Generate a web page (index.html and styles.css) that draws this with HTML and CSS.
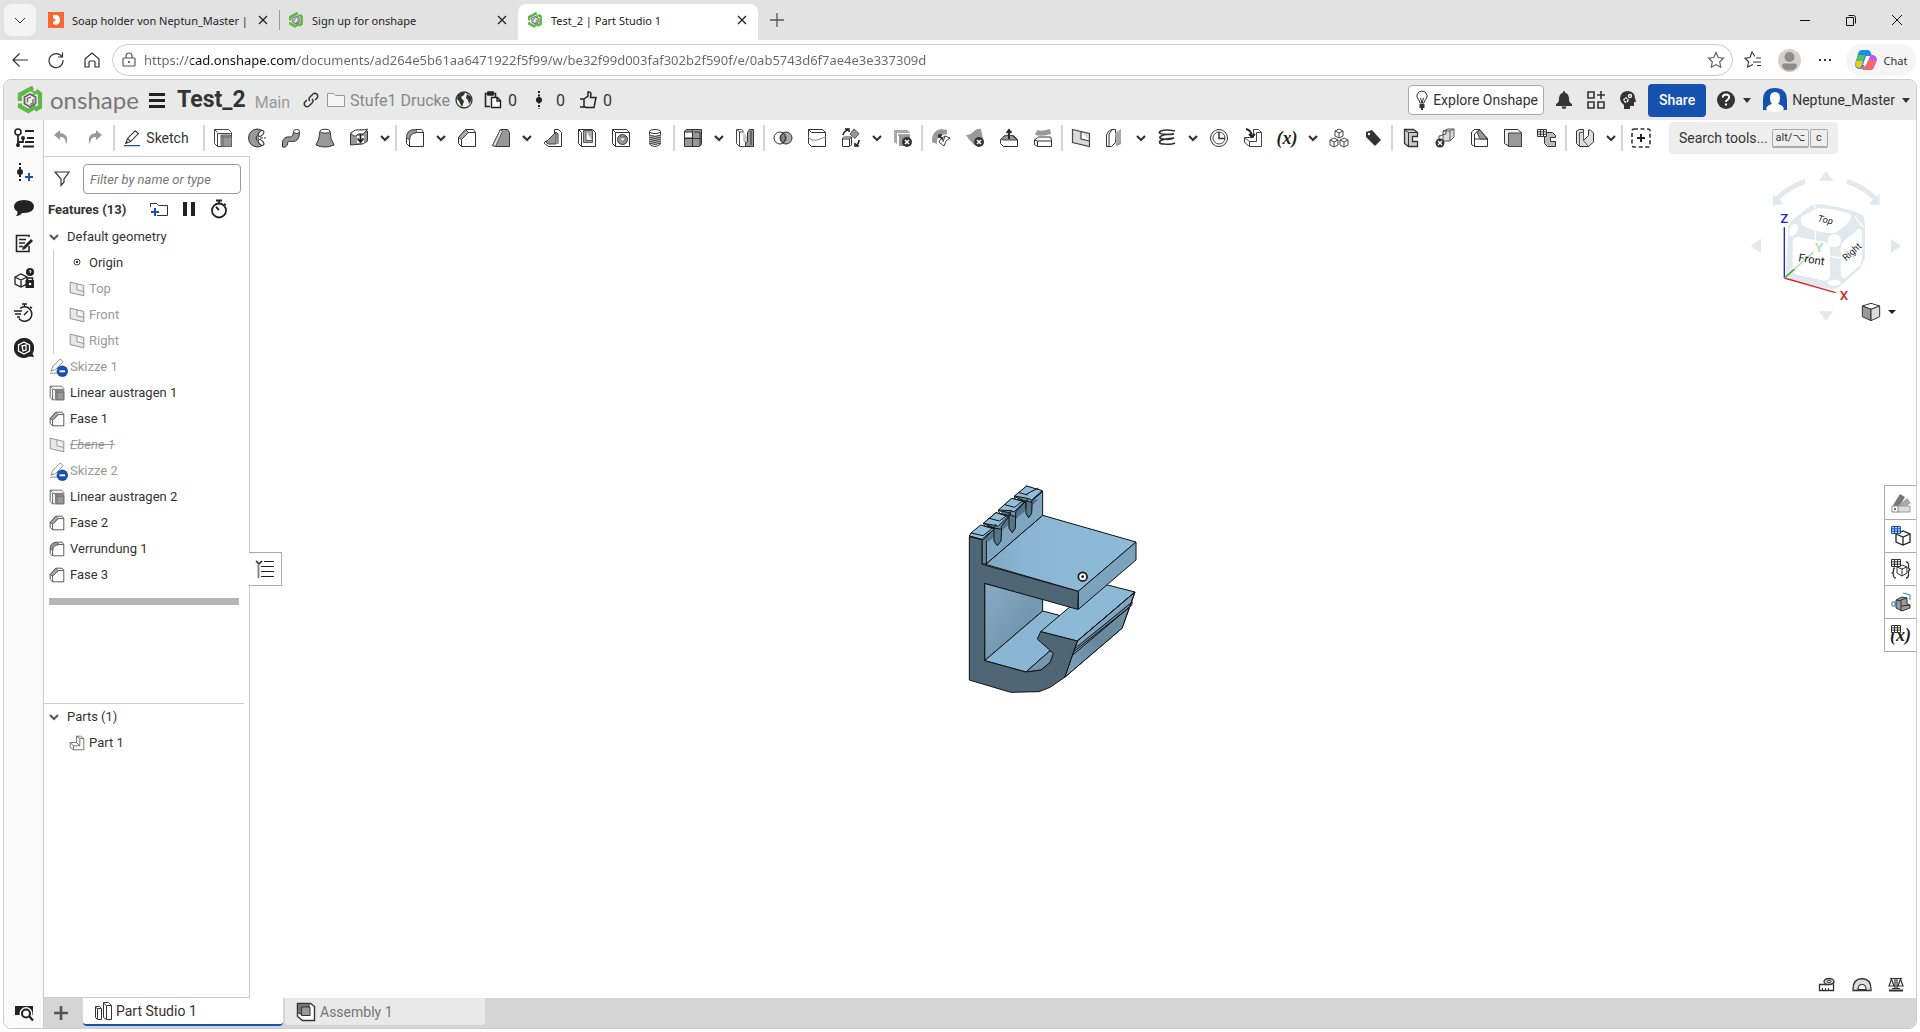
FILE: index.html
```html
<!DOCTYPE html>
<html lang="en">

<head>
    <meta charset="UTF-8">
    <meta name="viewport" content="width=device-width, initial-scale=1.0">
    <title>Test_2 | Part Studio 1</title>
    <link rel="stylesheet" href="styles.css">
</head>

<body>

    <!-- shared icons -->
    <svg class="defs">
        <symbol id="chev" viewBox="0 0 12 12"><path d="M2 4l4 4 4-4" fill="none" stroke="#333" stroke-width="2.2"/></symbol>
        <symbol id="caret" viewBox="0 0 10 6"><path d="M0 0h10L5 6z" fill="#333"/></symbol>
        <symbol id="close" viewBox="0 0 10 10"><path d="M1 1l8 8M9 1l-8 8" fill="none" stroke="#222" stroke-width="1.3"/></symbol>
        <symbol id="logo" viewBox="0 0 26 28">
            <path d="M2.800 15V8.500L16 1.500M19 4.500l4 3.500v13l-5 3M13 26L3 20.500v-3M10 25.500l9-5" fill="none" stroke="#5cb947" stroke-width="4.200"/>
            <path d="M4 10l9-6 6 3-9 5M22 12v8l-9 5-8-5" fill="none" stroke="#5cb947" stroke-width="2"/>
            <path d="M13 8l5.500 3v6.500L13 21l-5.500-3.500V11z" fill="#eee" stroke="#666" stroke-width="1.800"/>
            <path d="M10.500 16.500v-4L14 11M16 13v4l-3 1.500" fill="none" stroke="#666" stroke-width="1.300"/>
        </symbol>
        <symbol id="extrude" viewBox="0 0 20 20">
            <path d="M1.500 1.500h14l3 3v14h-14l-3-3zM4.500 18.500v-13h13M1.500 1.500l3 3" fill="#fff" stroke="#444"/>
            <path d="M8 7h9l1.500 2v9.500H9.500L8 17z" fill="#999" stroke="#666"/><path d="M8 7l2 2v9M10 9h8" fill="none" stroke="#666"/>
        </symbol>
        <symbol id="chamfer" viewBox="0 0 20 20">
            <path d="M1.500 9.500l7-8h8l2 3v14h-14l-3-3zM4.500 18.500V11l7-6.500h7" fill="#fff" stroke="#333"/>
            <path d="M1.500 9.500l7-8 3 3-7 7z" fill="#aaa" stroke="#444"/>
        </symbol>
        <symbol id="fillet" viewBox="0 0 20 20">
            <path d="M1.500 10q0-8.500 9-8.500h6l2 3v14h-14l-3-3zM4.500 18.500V12q0-7 7-7.500h7" fill="#fff" stroke="#333"/>
            <path d="M1.500 10q0-8.500 9-8.500l2 3q-8 0-8 7.500z" fill="#999" stroke="#555"/>
        </symbol>
        <symbol id="plane" viewBox="0 0 20 20">
            <path d="M1.500 1.500l17 4v13l-17-4zM10 3.500v7.500l8.500 2" fill="#d9d9d9" stroke="#444" stroke-width="1.200"/>
        </symbol>
        <symbol id="pencil" viewBox="0 0 20 20">
            <path d="M3 16l2-5.500L13.500 2 17 5 8.500 14zM5 10.500L8.500 14" fill="#fff" stroke="#333" stroke-width="1.200"/><path d="M3 16l1-3 2 2z" fill="#333"/>
            <path d="M1 18.500h18" stroke="#1651b0" stroke-width="1.500"/>
        </symbol>
        <symbol id="hidden-sketch" viewBox="0 0 20 20">
            <path d="M2 14l2-5L12 1l3 3-8 8zM1 16h9" fill="#fff" stroke="#888"/>
            <circle cx="14" cy="14" r="6" fill="#1651b0"/><path d="M11 14h6" stroke="#fff" stroke-width="2"/>
        </symbol>
        <symbol id="grid" viewBox="0 0 10 8"><path d="M.5.500h9v7h-9zM3.500 0v8M6.500 0v8M0 2.800h10M0 5.200h10" fill="#fff" stroke="#333"/></symbol>
    </svg>

    <!-- browser tabs -->
    <div class="tabstrip">
        <button class="tab-menu" aria-label="Tab actions"><svg width="12" height="12" viewBox="0 0 12 12"><path d="M1 4l5 5 5-5" fill="none" stroke="#333"/></svg></button>
        <div class="tab">
            <svg width="16" height="16" viewBox="0 0 16 16"><path d="M0 0h16v16H0z" fill="#fa6831"/><path d="M5 3h4q3 1 3 5t-4 5l-3-1v-2l3-2-3-2z" fill="#fff"/></svg>
            <span>Soap holder von Neptun_Master |</span>
            <button aria-label="Close tab"><svg width="10" height="10"><use href="#close"/></svg></button>
        </div>
        <div class="tab tab-second">
            <svg width="16" height="16"><use href="#logo"/></svg>
            <span>Sign up for onshape</span>
            <button aria-label="Close tab"><svg width="10" height="10"><use href="#close"/></svg></button>
        </div>
        <div class="tab tab-active">
            <svg width="16" height="16"><use href="#logo"/></svg>
            <span>Test_2 | Part Studio 1</span>
            <button aria-label="Close tab"><svg width="10" height="10"><use href="#close"/></svg></button>
        </div>
        <button class="new-tab" aria-label="New tab"><svg width="16" height="16" viewBox="0 0 16 16"><path d="M8 1v14M1 8h14" stroke="#555" stroke-width="1.300"/></svg></button>
        <div class="window-buttons">
            <button aria-label="Minimize"><svg width="12" height="12" viewBox="0 0 12 12"><path d="M1 6.500h10" stroke="#111"/></svg></button>
            <button aria-label="Restore"><svg width="12" height="12" viewBox="0 0 12 12"><path d="M1.500 3.500h7v8h-7zM3.500 1.500h5q2 0 2 2v6" fill="none" stroke="#111"/></svg></button>
            <button aria-label="Close"><svg width="12" height="12" viewBox="0 0 12 12"><path d="M1 1l10 10M11 1L1 11" stroke="#111"/></svg></button>
        </div>
    </div>

    <!-- address bar -->
    <div class="addressbar">
        <button aria-label="Back"><svg width="18" height="18" viewBox="0 0 18 18"><path d="M17 9H2M8.500 2.500L2 9l6.500 6.500" fill="none" stroke="#333" stroke-width="1.200"/></svg></button>
        <button aria-label="Refresh"><svg width="18" height="18" viewBox="0 0 18 18"><path d="M15 6a7 7 0 1 0 1 3M15.500 1.500V6H11" fill="none" stroke="#333" stroke-width="1.200"/></svg></button>
        <button aria-label="Home"><svg width="18" height="18" viewBox="0 0 18 18"><path d="M2 8l7-6 7 6v8h-4v-5q0-1-1-1H7q-1 0-1 1v5H2z" fill="none" stroke="#333" stroke-width="1.200"/></svg></button>
        <div class="url">
            <svg width="14" height="16" viewBox="0 0 14 16"><path d="M2 6h10q1 0 1 1v6q0 1-1 1H2q-1 0-1-1V7q0-1 1-1zM4 6V4q0-3 3-3t3 3v2" fill="none" stroke="#555" stroke-width="1.200"/><circle cx="7" cy="10" r="1" fill="#333"/></svg>
            <input type="text" aria-label="Address" value="https://cad.onshape.com/documents/ad264e5b61aa6471922f5f99/w/be32f99d003faf302b2f590f/e/0ab5743d6f7ae4e3e337309d">
            <button aria-label="Add to favorites"><svg width="18" height="18" viewBox="0 0 18 18"><path d="M9 1.500l2.300 5 5.200.6-3.800 3.700 1 5.400L9 13.600l-4.700 2.600 1-5.400L1.500 7.100l5.200-.6z" fill="none" stroke="#555" stroke-width="1.100"/></svg></button>
        </div>
        <button aria-label="Favorites"><svg width="18" height="18" viewBox="0 0 18 18"><path d="M9 11H17M12 7h5M13 14.500h4" stroke="#333"/><path d="M11 5.500L8 1 6 6.500l-5 .7 3.600 3.600-1 5.200L9 13.500" fill="none" stroke="#333" stroke-width="1.100"/></svg></button>
        <button aria-label="Profile"><svg width="23" height="23" viewBox="0 0 23 23"><circle cx="11.500" cy="11.500" r="11.500" fill="#d2d1cf"/><circle cx="11.500" cy="8" r="5" fill="#8f8c89"/><path d="M4 17q0-2.500 2.500-2.500h10q2.500 0 2.500 2.500-2 4.500-7.500 4.500T4 17z" fill="#8f8c89"/></svg></button>
        <button aria-label="Settings"><svg width="14" height="4" viewBox="0 0 14 4"><path d="M1 1h2v2H1zM6 1h2v2H6zM11 1h2v2h-2z" fill="#333"/></svg></button>
        <button class="chat">
            <svg width="22" height="20" viewBox="0 0 22 20"><path d="M7 0h6q2 0 3 3l1 3h-5l-3 10q-1 3-4 3Q0 19 0 14l3-10q1-4 4-4z" fill="#1b8de0"/><path d="M3 5h7L7 14q-1 4-4 4-3-1-3-4z" fill="#4fbf6e"/><path d="M1 11h7l-1 4q-1 3-3 3-3-1-4-4z" fill="#f0c52c"/><path d="M15 5h3q4 1 4 5l-3 7q-1 3-4 3H9q-2 0-3-3h3q2 0 3-4z" fill="#b95bea"/><path d="M12 10h9l-2 7q-1 3-4 3H9q-2 0-3-3h3q2 0 3-7z" fill="#f5686a"/><path d="M11 6h4l-4 9H8z" fill="#fff"/></svg>
            Chat
        </button>
    </div>

    <div class="app">

        <header class="header">
            <svg class="brand-icon" width="26" height="28"><use href="#logo"/></svg>
            <span class="brand">onshape</span>
            <button class="menu" aria-label="Menu"><svg width="16" height="16" viewBox="0 0 16 16"><path d="M0 1h16v3H0zM0 7h16v3H0zM0 13h16v3H0z" fill="#222"/></svg></button>
            <h1>Test_2</h1>
            <span class="branch">Main</span>
            <button class="link" aria-label="Link"><svg width="16" height="16" viewBox="0 0 16 16"><path d="M7 9Q5 7 7 5l3-3q2-1.500 4 .3 1.500 2 0 3.700L12 8M9 7q2 2 0 4l-3 3q-2 1.500-4-.3-1.500-2 0-3.700L4 8" fill="none" stroke="#333" stroke-width="1.500"/></svg></button>
            <a class="folder" href="#">
                <svg width="18" height="16" viewBox="0 0 18 16"><path d="M.500 14.500v-13h6l2 2h9v11z" fill="#f5f5f5" stroke="#999"/></svg>
                Stufe1 Drucke
            </a>
            <svg class="globe" width="18" height="18" viewBox="0 0 18 18"><circle cx="9" cy="9" r="8" fill="#eee" stroke="#333" stroke-width="1.300"/><path d="M3 4q3-3 7-2.500L9 4 6 6l1 2 2 2-1 3-1 3q-2-3-3-6L2 8zM12 3l4 3v4l-2 3-1-4-2-2z" fill="#333"/></svg>
            <button class="count"><svg width="18" height="18" viewBox="0 0 18 18"><path d="M6 15.500H1.500v-13h10V6M4 1h5v3H4z" fill="none" stroke="#222" stroke-width="1.600"/><path d="M7.500 6.500h6l3 3v7h-9zM13 6v4h4" fill="#fff" stroke="#222" stroke-width="1.400"/></svg>0</button>
            <button class="count count-versions"><svg width="8" height="18" viewBox="0 0 8 18"><path d="M4 0v18" stroke="#222" stroke-width="2" stroke-dasharray="2 1.500"/><circle cx="4" cy="9" r="3" fill="#222"/></svg>0</button>
            <button class="count count-likes"><svg width="18" height="18" viewBox="0 0 18 18"><path d="M1 8h4v8H1M5 8l4-3V1q3-.5 3 2l-.5 3.500H17l-2 10H7l-2-1" fill="none" stroke="#222" stroke-width="1.500"/></svg>0</button>

            <div class="header-right">
                <button class="explore"><svg width="12" height="20" viewBox="0 0 12 20"><path d="M4 13q0-2-2-4-1.500-2-1-4 1-4 5-4t5 4q.5 2-1 4-2 2-2 4zM4.500 8l1.500 5 1.500-5" fill="none" stroke="#333"/><path d="M3.500 14h5v4h-5zM5 18h2v2H5z" fill="#333"/></svg>Explore Onshape</button>
                <button class="head-icon" aria-label="Notifications"><svg width="16" height="18" viewBox="0 0 16 18"><path d="M8 0q1 0 1.500 2Q13 3 13 8q0 4 3 5v2H0v-2q3-1 3-5 0-5 3.500-6Q7 0 8 0zM5.500 15.500h5Q10 18 8 18t-2.500-2.500z" fill="#333"/></svg></button>
                <button class="head-icon" aria-label="App store"><svg width="18" height="18" viewBox="0 0 18 18"><path d="M1 1h6v6H1zM1 11h6v6H1zM11 11h6v6h-6zM14 0v8M10 4h8" fill="none" stroke="#333" stroke-width="1.600"/></svg></button>
                <button class="head-icon" aria-label="Learning"><svg width="18" height="18" viewBox="0 0 18 18"><path d="M5 18v-4Q1 11 1 7q1-7 8-7 7 1 7 7l1 4h-2v4h-4v3z" fill="#333"/><circle cx="7" cy="9" r="2" fill="none" stroke="#fff" stroke-width="1.500" stroke-dasharray="2 .6"/><circle cx="11" cy="5" r="1.500" fill="none" stroke="#fff" stroke-width="1.300"/></svg></button>
                <button class="share">Share</button>
                <button class="help" aria-label="Help"><svg width="18" height="18" viewBox="0 0 18 18"><circle cx="9" cy="9" r="9" fill="#333"/><path d="M5.800 6.500q0-3 3.200-3t3.200 2.800q0 1.700-2 2.700Q9 9.700 9 11" fill="none" stroke="#fff" stroke-width="2"/><path d="M8 12.500h2v2H8z" fill="#fff"/></svg><svg width="8" height="5"><use href="#caret"/></svg></button>
                <button class="user"><svg width="24" height="24" viewBox="0 0 24 24"><path d="M0 22V12Q0 0 12 0t12 12v10z" fill="#1651b0"/><path d="M12 4q5 0 5 6 0 4-2 6 5 1 6 5-3 3-9 3t-9-3q1-4 6-5-2-2-2-6 0-6 5-6z" fill="#fff"/></svg>Neptune_Master<svg class="user-caret" width="8" height="5"><use href="#caret"/></svg></button>
            </div>
        </header>

        <div class="main">

            <nav class="rail">
                <button aria-label="Feature list"><svg width="20" height="20" viewBox="0 0 20 20"><circle cx="4" cy="4" r="3" fill="#fff" stroke="#222" stroke-width="1.600"/><path d="M4 7v12M4 14h5v-4M11 3h9M13 10h7M11 14h9M9 18.500h11" fill="none" stroke="#222" stroke-width="1.800"/><circle cx="4" cy="17" r="2" fill="#222"/><circle cx="9" cy="10" r="2" fill="#222"/></svg></button>
                <button aria-label="Create version"><svg width="20" height="20" viewBox="0 0 20 20"><path d="M6 0v20" stroke="#222" stroke-width="2" stroke-dasharray="2 2"/><circle cx="6" cy="9" r="3" fill="#222"/><path d="M15 10v8M11 14h8" stroke="#1651b0" stroke-width="2"/></svg></button>
                <button aria-label="Comments"><svg width="20" height="20" viewBox="0 0 20 20"><path d="M10 2q9 0 10 6 0 7-10 7l-2 0q-2 3-6 3 2-2 1.500-4.500Q0 12 0 8q1-6 10-6z" fill="#222"/></svg></button>
                <button aria-label="Notes"><svg width="20" height="20" viewBox="0 0 20 20"><path d="M15 4V2.500H2.500v16H15V13M5 6.500h7M5 10h6M5 13.500h4" fill="none" stroke="#222" stroke-width="1.600"/><path d="M17 6l2 2-8 8-3 1 1-3z" fill="#222"/></svg></button>
                <button aria-label="Configuration"><svg width="20" height="20" viewBox="0 0 20 20"><path d="M1 9l6-3 6 3v7l-6 3-6-3zM1 9l6 3 6-3M7 12v7" fill="none" stroke="#222" stroke-width="1.300"/><circle cx="16" cy="4" r="4" fill="#222"/><path d="M15 3q1-1 2 0 0 1-1 2" fill="none" stroke="#fff"/><path d="M11.500 12H20v8h-8.500z" fill="#222"/><path d="M13.500 12v-2h5v2" fill="none" stroke="#222" stroke-width="1.500"/><circle cx="16" cy="16" r="1.300" fill="#fff"/></svg></button>
                <button aria-label="History"><svg width="20" height="20" viewBox="0 0 20 20"><path d="M6 5.500a7.200 7.200 0 1 1-1 10M8 1h5M10.500 1v3M10 12l4-4M0 8h8M1 11h6M3 14h3M16 4l2 1" fill="none" stroke="#222" stroke-width="1.500"/></svg></button>
                <button aria-label="Learning center"><svg width="20" height="20" viewBox="0 0 20 20"><path d="M10 0a10 10 0 0 1 8.500 15.500L20 19l-5-.5A10 10 0 1 1 10 0z" fill="#222"/><path d="M10 4l5.500 3v6L10 16l-5.500-3V7zM8 8l4-1v5l-3 1z" fill="none" stroke="#fff" stroke-width="1.300"/></svg></button>
                <button class="rail-last" aria-label="Search"><svg width="20" height="18" viewBox="0 0 20 18"><path d="M1 2h18v9H1z" fill="#222"/><circle cx="12" cy="9.500" r="6.500" fill="#fafafa"/><circle cx="12" cy="9.500" r="4" fill="#fafafa" stroke="#222" stroke-width="2"/><path d="M15 12l4 4.500" stroke="#222" stroke-width="2.200"/></svg></button>
            </nav>

            <div class="workspace">

                <div class="toolbar">
                    <button class="tool" aria-label="Undo"><svg class="ic" viewBox="0 0 20 20"><path d="M9 2L3 7l6 5V9q6-1 6 8 4-11-6-12z" fill="#999"/></svg></button>
                    <button class="tool" aria-label="Redo"><svg class="ic" viewBox="0 0 20 20"><path d="M11 2l6 5-6 5V9q-6-1-6 8Q1 6 11 5z" fill="#999"/></svg></button>
                    <span class="sep"></span>
                    <button class="sketch"><svg width="18" height="20"><use href="#pencil"/></svg>Sketch</button>
                    <span class="sep"></span>
                    <button class="tool" aria-label="Extrude"><svg class="ic"><use href="#extrude"/></svg></button>
                    <button class="tool" aria-label="Revolve"><svg class="ic" viewBox="0 0 20 20"><path d="M16 3Q13 1 10 1 2 2 1.500 10 2 18 10 19q3 0 6-2l-4-5q-3 1-3-2t3-2z" fill="#999" stroke="#333"/><ellipse cx="14" cy="5.500" rx="2" ry="3.500" transform="rotate(45 14 5.500)" fill="#fff" stroke="#333"/><ellipse cx="14" cy="14.500" rx="2" ry="3.500" transform="rotate(-45 14 14.500)" fill="#fff" stroke="#333"/><path d="M9 10h10" stroke="#333" stroke-dasharray="3 1"/></svg></button>
                    <button class="tool" aria-label="Sweep"><svg class="ic" viewBox="0 0 20 20"><path d="M1.500 19v-5q1-6 8-5 3-.5 3-5h6q0 7-4 9-3 1-7 0-1 1-1 4-2 3-5 2z" fill="#999" stroke="#333"/><ellipse cx="15.500" cy="3.500" rx="3" ry="2" fill="#fff" stroke="#333"/></svg></button>
                    <button class="tool" aria-label="Loft"><svg class="ic" viewBox="0 0 20 20"><path d="M5 3q-.5 9-4 14 9 4 18 0-4-6-4-14z" fill="#999" stroke="#333"/><ellipse cx="10" cy="3.200" rx="5" ry="2" fill="#fff" stroke="#333"/></svg></button>
                    <button class="tool" aria-label="Thicken"><svg class="ic" viewBox="0 0 20 20"><path d="M1.500 6q3 2 6-1l4-3 7 1v10l-5 3-12 1z" fill="#999" stroke="#333"/><path d="M1.500 5l5-3h6q3 0 6-1l-4 5q-6-1-8 2-2 1-5-3z" fill="#fff" stroke="#333"/><path d="M8 8h7v7H8z" fill="#fff"/><path d="M11.500 6v7M8.500 10.500l3 3.500 3-3.500" fill="none" stroke="#222" stroke-width="1.800"/></svg></button>
                    <button class="drop" aria-label="More"><svg class="ch"><use href="#chev"/></svg></button>
                    <span class="sep"></span>
                    <button class="tool" aria-label="Fillet"><svg class="ic"><use href="#fillet"/></svg></button>
                    <button class="drop" aria-label="More"><svg class="ch"><use href="#chev"/></svg></button>
                    <button class="tool" aria-label="Chamfer"><svg class="ic"><use href="#chamfer"/></svg></button>
                    <button class="tool" aria-label="Draft"><svg class="ic" viewBox="0 0 20 20"><path d="M1.500 17.500l8-16h7l2 3v14h-14z" fill="#999" stroke="#333"/><path d="M1.500 17.500l8-16 2 2-7 15z" fill="#ddd" stroke="#555"/></svg></button>
                    <button class="drop" aria-label="More"><svg class="ch"><use href="#chev"/></svg></button>
                    <button class="tool" aria-label="Rib"><svg class="ic" viewBox="0 0 20 20"><path d="M1.500 14l10-5V1.500h4l3 3v14h-13l-4-3z" fill="#fff" stroke="#333"/><path d="M3 14L13 4v12H5zM13 4l2 2v10" fill="#999" stroke="#444"/></svg></button>
                    <button class="tool" aria-label="Shell"><svg class="ic" viewBox="0 0 20 20"><path d="M1.500 1.500h14l3 3v14h-14l-3-3zM4.500 18.500v-14M1.500 1.500l3 3" fill="#fff" stroke="#333"/><path d="M6.500 2.500h9v12h-9zM9 2.500v10h6" fill="#aaa" stroke="#555"/></svg></button>
                    <button class="tool" aria-label="Hole"><svg class="ic" viewBox="0 0 20 20"><path d="M1.500 1.500h14l3 3v14h-14l-3-3zM4.500 18.500v-14h14M1.500 1.500l3 3" fill="#fff" stroke="#333"/><circle cx="11.500" cy="11.500" r="5" fill="#999" stroke="#333"/><path d="M9 9q4 1 5-1 1 4-2 6" fill="#ddd" stroke="#555"/></svg></button>
                    <button class="tool" aria-label="Thread"><svg class="ic" viewBox="0 0 20 20"><path d="M4.500 4v12q5 5 11 0V4" fill="#fff" stroke="#333"/><ellipse cx="10" cy="3.500" rx="5.500" ry="2" fill="#fff" stroke="#333"/><path d="M4 6q6 3 12 0v9q-6 3-12 0z" fill="#bbb"/><path d="M4 7q6 3 12 0M4 9q6 3 12 0M4 11q6 3 12 0M4 13q6 3 12 0M4 15q6 3 12 0" fill="none" stroke="#444"/></svg></button>
                    <span class="sep"></span>
                    <button class="tool" aria-label="Linear pattern"><svg class="ic" viewBox="0 0 20 20"><path d="M1.500 3l2-1.500h15v15l-2 2h-15z" fill="#999" stroke="#333"/><path d="M2 4h7v5H2z" fill="#fff"/><path d="M9.500 2v16M1.500 10.500h17M1.500 4H9M11 4h6v14" fill="none" stroke="#333"/></svg></button>
                    <button class="drop" aria-label="More"><svg class="ch"><use href="#chev"/></svg></button>
                    <button class="tool" aria-label="Mirror"><svg class="ic" viewBox="0 0 20 20"><path d="M1.500 1.500h5l2 2v8l2 3v4h-6l-3-3zM4.500 18V4l-2-2M4.500 4h4" fill="#fff" stroke="#444"/><path d="M8 3l4 6v6l-4-3z" fill="#ccc"/><path d="M18.500 1.500h-4l-2 3v9l-2 2v3h8zM16 3v14" fill="#999" stroke="#333"/></svg></button>
                    <span class="sep"></span>
                    <button class="tool" aria-label="Boolean"><svg class="ic" viewBox="0 0 20 20"><circle cx="13" cy="10" r="6" fill="#aaa" stroke="#333"/><circle cx="7" cy="10" r="6" fill="none" stroke="#333"/><path d="M10 5q5 5 0 10-5-5 0-10z" fill="#888" stroke="#333"/></svg></button>
                    <button class="tool" aria-label="Split"><svg class="ic" viewBox="0 0 20 20"><path d="M1.500 1.500h14l3 3v14h-14l-3-3zM4.500 4.500h14M1.500 1.500l3 3" fill="#fff" stroke="#333"/><path d="M1 9l4 3q4 1 8-1t6-2" fill="none" stroke="#888"/></svg></button>
                    <button class="tool" aria-label="Transform"><svg class="ic" viewBox="0 0 20 20"><path d="M1.500 10.500l2-1.500h7v8l-2 1.500h-7zM1.500 11h7v7M8.500 11l2-2" fill="#fff" stroke="#333"/><path d="M13 1l5 4.500-4 5L9 6z" fill="#999" stroke="#555"/><path d="M2 7q1-4 5-5M4 1h4v3M18 12q0 4-4 6M14 15v3h4" fill="none" stroke="#222" stroke-width="1.600"/></svg></button>
                    <button class="drop" aria-label="More"><svg class="ch"><use href="#chev"/></svg></button>
                    <button class="tool" aria-label="Delete part"><svg class="ic" viewBox="0 0 20 20"><path d="M1 2h13l3 2v4H5v9l-4-3z" fill="#aaa"/><path d="M4.500 17V5.500H17" fill="none" stroke="#fff"/><path d="M6 7h11v11H6z" fill="#999"/><circle cx="14" cy="14" r="5" fill="#333"/><path d="M12 12l4 4M16 12l-4 4" stroke="#fff" stroke-width="1.500"/></svg></button>
                    <span class="sep"></span>
                    <button class="tool" aria-label="Modify fillet"><svg class="ic" viewBox="0 0 20 20"><path d="M1 14Q0 3 10 1l6 1v4Q5 7 6 16z" fill="#999"/><path d="M8 14q1-4 6-6l5 2q-5 2-6 8zM14 8l-2 6" fill="#fff" stroke="#444"/><path d="M12 12L8 7M8 10V7h3" fill="none" stroke="#222" stroke-width="1.500"/></svg></button>
                    <button class="tool" aria-label="Delete face"><svg class="ic" viewBox="0 0 20 20"><path d="M1 7q5 0 8-4 4-3 7-2l2 10-9 6q-5-5-8-10z" fill="#999"/><circle cx="14" cy="14" r="5" fill="#333"/><path d="M12 12l4 4M16 12l-4 4" stroke="#fff" stroke-width="1.500"/></svg></button>
                    <button class="tool" aria-label="Move face"><svg class="ic" viewBox="0 0 20 20"><path d="M1.500 11.500l4-4h9l4 4v7h-14l-3-3z" fill="#fff" stroke="#333"/><path d="M2 11q5-6 12-3l4 4H4z" fill="#999" stroke="#444"/><path d="M10 11V3M7.500 5L10 2l2.500 3" fill="none" stroke="#222" stroke-width="1.800"/></svg></button>
                    <button class="tool" aria-label="Replace face"><svg class="ic" viewBox="0 0 20 20"><path d="M4 2q4 2 13-1l1 5q-8 3-16 1z" fill="#999"/><path d="M1.500 12l4-3h12l1 3v6.500h-14l-3-2zM4.500 18.500V13h14M1.500 12l3 1" fill="#fff" stroke="#333"/></svg></button>
                    <span class="sep"></span>
                    <button class="tool" aria-label="Plane"><svg class="ic"><use href="#plane"/></svg></button>
                    <button class="tool" aria-label="Surface"><svg class="ic" viewBox="0 0 20 20"><path d="M16 1l-4 5v12l4-2V1z" fill="#999"/><path d="M1.500 7q1-4 5-5.500h4v13l-4 4h-5zM4 18V6l3-4" fill="#fff" stroke="#333"/><path d="M10 5l6-4v12l-5 5z" fill="#aaa"/></svg></button>
                    <button class="drop" aria-label="More"><svg class="ch"><use href="#chev"/></svg></button>
                    <button class="tool" aria-label="Helix"><svg class="ic" viewBox="0 0 20 20"><path d="M18 3Q9 1 4 3q-4 2 1 3 7 1 12 0-12 0-14 3-1 2 4 2 6 1 10-1-11 1-14 3-2 3 4 3 7 1 11-1" fill="none" stroke="#333" stroke-width="1.700"/></svg></button>
                    <button class="drop" aria-label="More"><svg class="ch"><use href="#chev"/></svg></button>
                    <button class="tool" aria-label="Measure"><svg class="ic" viewBox="0 0 20 20"><circle cx="10" cy="10" r="8.500" fill="#fff" stroke="#333"/><circle cx="10" cy="10" r="6" fill="none" stroke="#444"/><path d="M10 4v6.500h6" fill="none" stroke="#333" stroke-width="1.500"/></svg></button>
                    <button class="tool" aria-label="Derived"><svg class="ic" viewBox="0 0 20 20"><path d="M10.500 1.500h5l3 3v14h-12l-5-4v-5h9zM6.500 18.500v-5h7v-9h5M1.500 9.500l5 4" fill="#fff" stroke="#444"/><path d="M3 1q5 1 6 7M6 6l3 3 3-3" fill="none" stroke="#222" stroke-width="1.800"/></svg></button>
                    <button class="tool variable" aria-label="Variable">(x)</button>
                    <button class="drop" aria-label="More"><svg class="ch"><use href="#chev"/></svg></button>
                    <button class="tool" aria-label="Composite part"><svg class="ic" viewBox="0 0 20 20"><path d="M6 3l4-2 4 2v5l-4 2-4-2zM6 3l4 2 4-2M10 5v5M1 12l4-2 4 2v5l-4 2-4-2zM1 12l4 2 4-2M5 14v5M11 12l4-2 4 2v5l-4 2-4-2zM11 12l4 2 4-2M15 14v5" fill="#fff" stroke="#444"/></svg></button>
                    <button class="tool" aria-label="Tag"><svg class="ic" viewBox="0 0 20 20"><path d="M3 4l6-2 9 10-6 6-9-9z" fill="#333"/><circle cx="6" cy="6" r="1.200" fill="#fff"/></svg></button>
                    <span class="sep"></span>
                    <button class="tool" aria-label="Sheet metal model"><svg class="ic" viewBox="0 0 20 20"><path d="M3.500 1.500h9l4 3v4h-5v5h5v5h-9l-4-3z" fill="#ccc" stroke="#333" stroke-width="1.300"/><path d="M3.500 1.500l4 3v14M7.500 4.500h9" fill="none" stroke="#333"/></svg></button>
                    <button class="tool" aria-label="Flange"><svg class="ic" viewBox="0 0 20 20"><path d="M8 3l5-2h6v8l-4 4H8zM8 3h7v10M15 3l4-2M11 2v4l-7 2v4" fill="#ddd" stroke="#555"/><circle cx="5" cy="15" r="4.500" fill="#333"/><path d="M3 13l4 4M7 13l-4 4" stroke="#fff" stroke-width="1.300"/></svg></button>
                    <button class="tool" aria-label="Hem"><svg class="ic" viewBox="0 0 20 20"><path d="M2.500 4l3-2.500h5l8 9v8h-13l-3-2zM5.500 18.500V6l5-4.500M5.500 11h13" fill="#fff" stroke="#333"/><path d="M8 4l3-2 7 9h-7z" fill="#999" stroke="#444"/></svg></button>
                    <button class="tool" aria-label="Tab"><svg class="ic" viewBox="0 0 20 20"><path d="M1.500 1.500h13l4 3v14h-12l-5-3z" fill="#eee" stroke="#333"/><path d="M5.500 5h13v13.500h-13z" fill="#999" stroke="#444"/></svg></button>
                    <button class="tool" aria-label="Sheet metal table"><svg class="ic" viewBox="0 0 20 20"><path d="M7.500 4.500h8l3 3v2h-5v4h5v5h-8l-3-3z" fill="#bbb" stroke="#333"/><use href="#grid" x="0" y="1" width="10" height="8"/></svg></button>
                    <span class="sep"></span>
                    <button class="tool" aria-label="Bend"><svg class="ic" viewBox="0 0 20 20"><path d="M1.500 3l3-1.500h4v11l5-5V2h2l3 3v9l-5 4.500h-9l-3-3z" fill="#ddd" stroke="#333"/><path d="M4.500 18V4.500h4v8M8.500 12.500l5 6" fill="none" stroke="#555"/></svg></button>
                    <button class="drop" aria-label="More"><svg class="ch"><use href="#chev"/></svg></button>
                    <span class="sep"></span>
                    <button class="tool" aria-label="Custom features"><svg class="ic" viewBox="0 0 20 20"><rect x="1" y="1" width="18" height="18" rx="2" fill="none" stroke="#333" stroke-width="1.600" stroke-dasharray="4 2.500"/><path d="M10 6v8M6 10h8" stroke="#222" stroke-width="2"/></svg></button>
                    <button class="search-tools">Search tools... <kbd>alt/⌥</kbd><kbd>c</kbd></button>
                </div>

                <div class="stage">
                    <aside class="panel">
                        <div class="filter">
                            <button aria-label="Filter"><svg width="16" height="16" viewBox="0 0 16 16"><path d="M1 1h14L10 8v3l-3 3.500V8z" fill="#fff" stroke="#333" stroke-width="1.200"/></svg></button>
                            <input type="text" aria-label="Filter by name or type" placeholder="Filter by name or type">
                        </div>
                        <div class="features">
                            <h2>Features (13)</h2>
                            <button aria-label="Add folder"><svg width="20" height="18" viewBox="0 0 20 18"><path d="M1.500 7V3.500h6l2 2h9v10H8" fill="none" stroke="#333"/><path d="M6 8v8M2 12h8" stroke="#1651b0" stroke-width="2"/></svg></button>
                            <button aria-label="Pause"><svg width="20" height="18" viewBox="0 0 20 18"><path d="M4 2h4v14H4zM12 2h4v14h-4z" fill="#222"/></svg></button>
                            <button aria-label="Timing"><svg width="20" height="20" viewBox="0 0 20 20"><circle cx="10" cy="11.500" r="7" fill="#fff" stroke="#222" stroke-width="1.800"/><path d="M7 1.500h6M10 2v3M15 5l2 1M10 11l-3-3" stroke="#222" stroke-width="1.800"/></svg></button>
                        </div>
                        <ul class="tree">
                            <li class="group"><svg class="ch"><use href="#chev"/></svg>Default geometry
                                <ul>
                                    <li><svg width="16" height="16" viewBox="0 0 16 16"><circle cx="8" cy="7" r="3" fill="#fff" stroke="#444"/><circle cx="8" cy="7" r="1.200" fill="#333"/></svg>Origin</li>
                                    <li class="off"><svg width="16" height="16"><use href="#plane"/></svg>Top</li>
                                    <li class="off"><svg width="16" height="16"><use href="#plane"/></svg>Front</li>
                                    <li class="off"><svg width="16" height="16"><use href="#plane"/></svg>Right</li>
                                </ul>
                            </li>
                            <li class="sketch-off"><svg width="19" height="19"><use href="#hidden-sketch"/></svg>Skizze 1</li>
                            <li><svg width="16" height="16"><use href="#extrude"/></svg>Linear austragen 1</li>
                            <li><svg width="16" height="16"><use href="#chamfer"/></svg>Fase 1</li>
                            <li class="off suppressed"><svg width="16" height="16"><use href="#plane"/></svg><s>Ebene 1</s></li>
                            <li class="sketch-off"><svg width="19" height="19"><use href="#hidden-sketch"/></svg>Skizze 2</li>
                            <li><svg width="16" height="16"><use href="#extrude"/></svg>Linear austragen 2</li>
                            <li><svg width="16" height="16"><use href="#chamfer"/></svg>Fase 2</li>
                            <li><svg width="16" height="16"><use href="#fillet"/></svg>Verrundung 1</li>
                            <li><svg width="16" height="16"><use href="#chamfer"/></svg>Fase 3</li>
                        </ul>
                        <div class="rollback"></div>
                        <ul class="tree parts">
                            <li class="group"><svg class="ch"><use href="#chev"/></svg>Parts (1)</li>
                            <li class="part"><svg width="16" height="16" viewBox="0 0 20 20"><path d="M9.500 1.500h5l4 3v14h-13l-4-3v-6h8zM5.500 18.500v-5h8v-9h5M1.500 9.500l4 4M9.500 1.500l4 3M9.500 9.500l4 4" fill="#fff" stroke="#555"/></svg>Part 1</li>
                        </ul>
                    </aside>

                    <div class="viewport">
                        <button class="panel-toggle" aria-label="Toggle feature list"><svg width="20" height="20" viewBox="0 0 20 20"><path d="M1 2l3 3 3-3" fill="none" stroke="#222" stroke-width="1.500"/><path d="M3.500 6v13" stroke="#888" stroke-width="2"/><path d="M9 2.500h10M6 7.500h13M6 12.500h13M6 17.500h13" stroke="#222"/></svg></button>

                        <!-- the part -->
                        <svg class="model" viewBox="0 0 660 720">
                            <defs>
                                <linearGradient id="wall" x1="0" y1="0" x2="1" y2="1"><stop offset="0" stop-color="#88acc5"/><stop offset=".6" stop-color="#7397ae"/><stop offset="1" stop-color="#86b0cc"/></linearGradient>
                                <linearGradient id="hook" x1="0" y1="1" x2="1" y2="0"><stop offset="0" stop-color="#7fa7c2"/><stop offset=".5" stop-color="#66869b"/><stop offset="1" stop-color="#6f93aa"/></linearGradient>
                                <linearGradient id="shelf" x1="0" y1="0" x2="1" y2="0"><stop offset="0" stop-color="#7ea7c2"/><stop offset=".25" stop-color="#8ab6d3"/><stop offset="1" stop-color="#8ebbd8"/></linearGradient>
                            </defs>
                            <g stroke="#111" stroke-width="3" stroke-linejoin="round">
                                <path d="M134 340l174 46v37L134 572z" fill="url(#wall)"/>
                                <path d="M134 572l174-149 50 13-15 60-13 46-72 64z" fill="#8ab6d3"/>
                                <path d="M258 606l72-64 12 8-12 28-27 22z" fill="#7398b0"/>
                                <path d="M302 485l173-147 110 28-173 147z" fill="#8cb9d6"/>
                                <path d="M412 513l173-147-39 109-172 147z" fill="#7fa7c2"/>
                                <path d="M404 537l166-140-24 78-172 147z" fill="url(#hook)" stroke="none"/>
                                <path d="M405 535l172-139-2 10-175 140M398 555l170-143" fill="none"/>
                                <path d="M546 475L374 622l38-109 173-147z" fill="none"/>
                                <path d="M137 283l171-147 280 80-173 148z" fill="url(#shelf)"/>
                                <path d="M415 364l173-148v54L415 418z" fill="#7ca3bd"/>
                                <path d="M137 205L308 65v71L137 283z" fill="#7fa6c0"/>
                                <path d="M126 209l13-12v84l-13 2z" fill="#65869b"/>
                                <path d="M88 200v430l124 37 85-2 33-13 44-30 38-109-110-28-10 22 48 43-10 28-27 22-45 6-124-34V340l279 78 2-54-289-81v-74z" fill="#4f6676"/>

                                <!-- teeth, back to front -->
                                <path d="M105 195L245 75l50 15-150 125z" fill="#56758a" stroke="none"/>
                                <path d="M223 80l37-32 47 17-32 27v30l-17-8V94z" fill="#6d91a8"/>
                                <path d="M223 78l37-30 47 14-32 28-12-5-40-7z" fill="#8fbedb"/>
                                <path d="M223 80l4 10 31 6 5-11M260 72l35-18M237 68l26 7" fill="none"/>
                                <path d="M258 92l18 6-1 32-9 13-8-13z" fill="#56758a"/>
                                <path d="M175 122l40-37 40 11-28 30v18l-19-8v-8z" fill="#6d91a8"/>
                                <path d="M175 120l40-35 37 10-29 30-10-3z" fill="#8fbedb"/>
                                <path d="M175 122l4 8 30 7 4-14M194 104l30 8 22-18" fill="none"/>
                                <path d="M207 134l20 6-1 35-9 13-10-13z" fill="#56758a"/>
                                <path d="M130 160l38-32 38 13-22 28v18l-22-6v-8z" fill="#6d91a8"/>
                                <path d="M130 160l38-32 36 11-30 30-10-3z" fill="#8fbedb"/>
                                <path d="M130 160l4 8 28 6 6-12M148 145l30 8 22-16" fill="none"/>
                                <path d="M162 174l23 4-2 35-11 14-10-14z" fill="#56758a"/>
                                <path d="M88 198l5-9 29-24 40 12-32 32z" fill="#8fbedb"/>
                                <path d="M88 198l38 11 8-9 28-22M93 189l36 8 26-20" fill="none"/>
                            </g>
                            <circle cx="428" cy="320" r="13" fill="#fff" stroke="#111" stroke-width="5"/><circle cx="428" cy="320" r="4" fill="#111"/>
                        </svg>

                        <!-- view cube -->
                        <svg class="cube" viewBox="0 18 588 552">
                            <g fill="#e1e8ee">
                                <path d="M318 63l22 29h-44zM318 512l22-28h-44zM93 288l30-22v44zM543 288l-30-22v44z"/>
                                <path d="M159 131l7 9q35-35 88-53l3 14q-48 18-78 47l11 15-32 3zM478 131l-7 9q-35-35-88-53l-3 14q48 18 78 47l-11 15 32 3z"/>
                                <path d="M205 225q3-10 70-60l25-3q100 15 130 35 8 15 4 130l-10 25q-50 45-70 62-10 4-25 2-100-18-125-32-8-8-4-60z"/>
                            </g>
                            <g fill="#fff">
                                <path d="M245 200l45-25q60 0 105 20 0 20-40 48-12 8-25 7-60-5-85-27-5-12 0-23z"/>
                                <path d="M218 275q2-15 18-14l80 16q14 5 14 20v80q-2 16-18 15l-80-18q-14-5-14-20z"/>
                                <path d="M362 300q0-20 12-28l40-35q10-3 12 10v80q-2 15-12 24l-38 33q-12 4-14-14z"/>
                                <ellipse cx="220" cy="240" rx="12" ry="20" transform="rotate(25 220 240)"/>
                                <circle cx="343" cy="272" r="20"/>
                                <ellipse cx="343" cy="398" rx="20" ry="9"/>
                            </g>
                            <path d="M286 240v40M330 318l30 6M280 165l8 10M405 200l25 32M420 346l8 10" stroke="#fff" stroke-width="4"/>
                            <path d="M193 232v152" stroke="#2222e0" stroke-width="4"/>
                            <path d="M193 384l154 44" stroke="#d62828" stroke-width="4"/>
                            <path d="M193 384l88-78" stroke="#a9dba9" stroke-width="4"/><path d="M193 384l30-26" stroke="#2bab2b" stroke-width="4"/>
                            <text x="181" y="220" class="axis axis-z">Z</text>
                            <text x="359" y="449" class="axis axis-x">X</text>
                            <text x="285" y="306" class="axis axis-y">Y</text>
                            <text x="234" y="334" class="face" transform="rotate(9 234 334)">Front</text>
                            <text x="378" y="334" class="face face-small" transform="rotate(-42 378 334)">Right</text>
                            <text x="292" y="214" class="face face-small face-top" transform="rotate(12 292 214)">Top</text>
                            <g stroke="#333" stroke-width="3" stroke-linejoin="round"><path d="M427 468l26-8 26 8-26 10z" fill="#fff"/><path d="M427 468l26 10v34l-26-12z" fill="#999"/><path d="M479 468l-26 10v34l26-12z" fill="#ddd"/></g>
                            <path d="M504 480h24l-12 12z" fill="#222"/>
                        </svg>

                        <div class="side-tools">
                            <button aria-label="Appearance"><svg class="ic" viewBox="0 0 20 20"><path d="M1 14L9 1l5 3-6 10z" fill="#777"/><path d="M7 13l9-8 4 5-6 4z" fill="#aaa"/><path d="M10 13h9v6H6v-6z" fill="#ddd" stroke="#999"/><path d="M1 13h6v6H1z" fill="#fff" stroke="#888"/><circle cx="4" cy="16" r="1" fill="#333"/></svg></button>
                            <button aria-label="Configurations"><svg class="ic" viewBox="0 0 20 20"><path d="M5 8l7-3 7 3v8l-7 3-7-3zM5 8l7 3 7-3M12 11v8" fill="#fff" stroke="#222" stroke-width="1.300"/><path d="M.500.500h9v7h-9zM3.500 0v8M6.500 0v8M0 2.800h10M0 5.200h10" fill="#bcd9f5" stroke="#1651b0"/></svg></button>
                            <button aria-label="Custom tables"><svg class="ic" viewBox="0 0 20 20"><path d="M6 8l5-2 5 2v6l-5 3-5-3zM6 8l5 2 5-2M11 10v7" fill="#fff" stroke="#333"/><path d="M4 9q-2 0-1.500 4L1 14l1.500 1Q2 19 5 19M15 3q3 0 2.500 4v2L19 10.500 17.500 12v4q0 3-2.500 3" fill="none" stroke="#333" stroke-width="1.300"/><use href="#grid" x="0" y="0" width="10" height="8"/></svg></button>
                            <button aria-label="Simulation"><svg class="ic" viewBox="0 0 20 20"><path d="M5 8l6-3 5 1v6l3 1v3l-8 3-6-3z" fill="#999" stroke="#333"/><path d="M10 14l9-1M10 14v5M10 8l6-2M10 8v6M5 8l5 1" stroke="#333" fill="none"/><path d="M1 10h3v4H1zM4 12h3M12 1l7 2v5" fill="none" stroke="#3b71c9"/></svg></button>
                            <button aria-label="Variable table" class="variable">(x)<svg class="mini" width="10" height="8"><use href="#grid"/></svg></button>
                        </div>

                        <div class="measure">
                            <button aria-label="Measure"><svg width="18" height="16" viewBox="0 0 18 16"><path d="M1.500 7.500h9l5-2v8h-14z" fill="#fff" stroke="#333" stroke-width="1.300"/><ellipse cx="11" cy="4.500" rx="5" ry="3" fill="#ddd" stroke="#333" stroke-width="1.300"/><ellipse cx="11" cy="4.500" rx="2" ry="1" fill="#fff" stroke="#333"/><path d="M4.500 11v2M7.500 11v2M10.500 11v2" stroke="#333"/></svg></button>
                            <button aria-label="Protractor"><svg width="20" height="16" viewBox="0 0 20 16"><path d="M1 12q0-10 9-10.500Q19 2 19 12v1.500H1z" fill="#ddd" stroke="#333" stroke-width="1.300"/><path d="M6 12.500q0-5 4-5t4 5z" fill="#fff" stroke="#333" stroke-width="1.200"/></svg></button>
                            <button aria-label="Mass properties"><svg width="16" height="16" viewBox="0 0 16 16"><path d="M1 13.500h14" stroke="#333" stroke-width="2"/><path d="M7 2v9M9 2v9M2 1.500h12M3.500 2L1 9h5zM12.500 2L10 9h5zM4 11.500h8" fill="none" stroke="#333" stroke-width="1.200"/></svg></button>
                        </div>
                    </div>
                </div>

                <div class="doc-tabs">
                    <button class="add" aria-label="Insert new tab"><svg width="16" height="16" viewBox="0 0 16 16"><path d="M8 1v14M1 8h14" stroke="#555" stroke-width="2.600"/></svg></button>
                    <button class="doc-tab doc-tab-active"><svg width="18" height="20" viewBox="0 0 18 20"><path d="M1.500 5.500h4l2 2v11h-4l-2-2zM3.500 18V8l-2-2M3.500 7.500h4M9.500 1.500h5l3 3v14h-5l-3-2zM12.500 18V5l-3-3M12.500 4.500h5" fill="#fff" stroke="#333"/></svg>Part Studio 1</button>
                    <button class="doc-tab"><svg width="20" height="20" viewBox="0 0 20 20"><path d="M1.500 1.500h13l4 3v14h-12l-5-4z" fill="#fff" stroke="#333" stroke-width="1.400"/><path d="M1.500 1.500h11l1 3v8h-8l-4-2z" fill="#777" stroke="#333"/><path d="M5.500 5h8.500v8.500H5.500z" fill="#999" stroke="#333"/></svg>Assembly 1</button>
                </div>
            </div>
        </div>
    </div>

</body>

</html>
```
FILE: styles.css
```css
* {
    box-sizing: border-box;
    margin: 0;
    padding: 0;
}

body {
    height: 100vh;
    display: flex;
    flex-direction: column;
    padding-bottom: 3px;
    background: #fff;
    color: #333;
    font-family: Roboto, "Liberation Sans", sans-serif;
    font-size: 13px;
    overflow: hidden;
}

button {
    display: flex;
    align-items: center;
    justify-content: center;
    flex: none;
    border: 0;
    background: none;
    color: inherit;
    font: inherit;
}

svg {
    display: block;
    flex: none;
}

ul {
    list-style: none;
}

.defs {
    position: absolute;
    width: 0;
    height: 0;
}

.ic {
    width: 20px;
    height: 20px;
}

.ch {
    width: 12px;
    height: 12px;
}

/* browser */
.tabstrip,
.addressbar {
    display: flex;
    flex: none;
    height: 40px;
    font-family: "Noto Sans", "Open Sans", sans-serif;
}

.tabstrip {
    padding-left: 4px;
    background: #e2e2e2;
    font-size: 11px;
    color: #222;
}

.tab-menu {
    width: 32px;
    height: 32px;
    margin-top: 4px;
    border-radius: 8px;
    background: #f3f3f3;
}

.tab {
    display: flex;
    align-items: center;
    width: 240px;
    padding: 0 6px 0 9px;
    white-space: nowrap;
}

.tab:nth-child(2) {
    margin-left: 3px;
}

.tab svg + span {
    flex: 1;
    margin-left: 8px;
}

.tab button {
    width: 20px;
    height: 20px;
}

.tab-second {
    width: 239px;
    background: linear-gradient(#999, #999) left / 1px 20px no-repeat;
}

.tab-active {
    height: 36px;
    margin-top: 4px;
    padding-bottom: 4px;
    border-radius: 8px 8px 0 0;
    background: #fff;
}

.new-tab {
    width: 38px;
}

.window-buttons {
    display: flex;
    margin-left: auto;
}

.window-buttons button {
    width: 46px;
}

.addressbar {
    align-items: center;
    padding: 0 4px 0 2px;
    font-size: 13px;
}

.addressbar > button {
    width: 36px;
    height: 32px;
}

.url {
    display: flex;
    align-items: center;
    flex: 1;
    height: 32px;
    margin: 0 2px;
    padding: 0 7px 0 9px;
    border: 1px solid #ccc;
    border-radius: 16px;
}

.url input {
    flex: 1;
    margin-left: 8px;
    border: 0;
    outline: 0;
    background: linear-gradient(90deg, #666 47px, #111 47px, #111 153px, #666 153px);
    background-clip: text;
    -webkit-background-clip: text;
    color: transparent;
    font: inherit;
}

.addressbar .chat {
    width: 70px;
    gap: 7px;
    margin-left: 3px;
    border-radius: 16px;
    background: #f5f5f5;
    font-size: 11px;
}

/* application frame */
.app {
    flex: 1;
    min-height: 0;
    display: flex;
    flex-direction: column;
    margin: -1px 3px 0;
    border: 1px solid #ccc;
    border-radius: 8px;
    overflow: hidden;
}

.header {
    display: flex;
    align-items: center;
    flex: none;
    height: 40px;
    padding: 0 6px 0 13px;
    background: #e9e9e9;
    font-size: 16px;
}

.brand {
    width: 99px;
    margin-left: 7px;
    color: #777;
    font-family: Lato, sans-serif;
    font-size: 24px;
    line-height: 28px;
}

.menu {
    margin-right: 12px;
}

.header h1 {
    font-size: 23px;
    font-weight: 700;
    line-height: 28px;
}

.branch {
    margin: 4px 13px 0 9px;
    color: #999;
}

.folder {
    display: flex;
    align-items: center;
    gap: 5px;
    margin: 0 5px 0 8px;
    color: #888;
    text-decoration: none;
}

.count {
    gap: 6px;
    margin-left: 11px;
}

.count-versions {
    gap: 13px;
    margin-left: 18px;
}

.count-likes {
    margin-left: 14px;
}

.header-right {
    display: flex;
    align-items: center;
    margin-left: auto;
    font-size: 14px;
}

.explore {
    height: 30px;
    gap: 5px;
    margin-right: 4px;
    padding: 0 5px 0 7px;
    border: 1px solid #aaa;
    border-radius: 4px;
    background: #fff;
}

.head-icon {
    width: 32px;
    height: 32px;
}

.share {
    height: 33px;
    margin: 0 11px 0 4px;
    padding: 0 11px;
    border-radius: 4px;
    background: #1651b0;
    color: #fff;
    font-weight: 500;
}

.help {
    gap: 8px;
    margin-right: 12px;
}

.user {
    gap: 5px;
}

.user-caret {
    margin-left: 2px;
}

.main {
    flex: 1;
    min-height: 0;
    display: flex;
}

.rail {
    display: flex;
    flex-direction: column;
    flex: none;
    width: 40px;
    border-right: 1px solid #ccc;
    background: #fafafa;
}

.rail button {
    height: 35px;
}

.rail .rail-last {
    height: 30px;
    margin-top: auto;
}

.workspace {
    flex: 1;
    min-width: 0;
    display: flex;
    flex-direction: column;
}

/* toolbar */
.toolbar {
    display: flex;
    align-items: center;
    flex: none;
    height: 36px;
    font-size: 14px;
}

.tool {
    width: 34px;
    height: 32px;
}

.drop {
    width: 18px;
    height: 32px;
}

.sep {
    flex: none;
    width: 2px;
    height: 26px;
    margin: 0 1px;
    background: #d5d5d5;
}

.sketch {
    width: 86px;
    gap: 5px;
    padding-right: 6px;
}

.variable {
    color: #222;
    font-family: "Liberation Serif", serif;
    font-size: 18px;
    font-style: italic;
    font-weight: 700;
}

.search-tools {
    height: 32px;
    margin-left: 11px;
    padding: 0 10px;
    border-radius: 4px;
    background: #eee;
}

kbd {
    height: 19px;
    margin-left: 1px;
    padding: 0 3px;
    border: 1px solid #aaa;
    border-bottom-width: 2px;
    border-radius: 2px;
    font-family: Roboto, "DejaVu Sans", sans-serif;
    font-size: 11px;
    line-height: 16px;
}

kbd:first-of-type {
    margin-left: 4px;
}

kbd:last-of-type {
    padding: 0 5px;
}

.stage {
    flex: 1;
    min-height: 0;
    display: flex;
}

/* feature list */
.panel {
    display: flex;
    flex-direction: column;
    flex: none;
    width: 206px;
    border: 1px solid #ccc;
    border-left: 0;
}

.filter {
    display: flex;
    align-items: center;
    margin-top: 7px;
    padding-right: 8px;
}

.filter button {
    width: 36px;
    margin-right: 3px;
}

.filter input {
    flex: 1;
    min-width: 0;
    height: 30px;
    padding: 0 6px;
    border: 1px solid #999;
    border-radius: 4px;
    color: #333;
    font: italic 13px Roboto, sans-serif;
}

.filter input::placeholder {
    color: #777;
}

.features {
    display: flex;
    align-items: center;
    gap: 10px;
    height: 30px;
    padding-left: 4px;
}

.features h2 {
    width: 91px;
    font-size: 13px;
    font-weight: 700;
}

.tree {
    line-height: 26px;
}

.tree li {
    display: flex;
    align-items: center;
    gap: 5px;
    min-height: 26px;
    padding-left: 5px;
}

.tree .group {
    flex-wrap: wrap;
    gap: 0 7px;
    padding-left: 4px;
}

.tree .group .ch {
    opacity: .8;
}

.tree .group ul {
    width: 100%;
    margin-left: 5px;
    border-left: 1px solid #ccc;
}

.tree .group li {
    gap: 4px;
    padding-left: 15px;
}

.tree .off {
    color: #999;
}

.tree .off svg {
    opacity: .6;
}

.suppressed {
    font-style: italic;
}

.tree .sketch-off {
    gap: 2px;
    color: #999;
}

.rollback {
    height: 7px;
    margin: 10px 10px 0 5px;
    background: #b5b5b5;
}

.parts {
    height: 294px;
    margin: auto 5px 0 0;
    border-top: 1px solid #ccc;
}

.tree .part {
    gap: 4px;
    padding-left: 25px;
}

/* graphics area */
.viewport {
    position: relative;
    flex: 1;
    min-width: 0;
}

.panel-toggle {
    position: absolute;
    left: -1px;
    top: 396px;
    width: 33px;
    height: 34px;
    border: 1px solid #aaa;
    border-left: 0;
    background: #fff;
}

.model {
    position: absolute;
    left: 690px;
    top: 314px;
    width: 220px;
    height: 240px;
}

.cube {
    position: absolute;
    right: 0;
    top: 0;
    width: 196px;
    height: 184px;
}

.axis {
    font: 500 40px Roboto, sans-serif;
}

.axis-z {
    fill: #2222e0;
}

.axis-x {
    fill: #d62828;
}

.axis-y {
    fill: #a9dba9;
}

.face {
    fill: #222;
    font: 34px Roboto, sans-serif;
}

.face-small {
    font-size: 28px;
}

.face-top {
    font-style: italic;
}

.side-tools {
    position: absolute;
    right: 0;
    top: 329px;
    border: 1px solid #aaa;
    border-right: 0;
}

.side-tools button {
    position: relative;
    width: 31px;
    height: 33px;
}

.side-tools button + button {
    border-top: 1px solid #aaa;
}

.mini {
    position: absolute;
    left: 6px;
    top: 6px;
}

.measure {
    position: absolute;
    right: 12px;
    bottom: 5px;
    display: flex;
    gap: 16px;
}

/* document tabs */
.doc-tabs {
    display: flex;
    flex: none;
    height: 30px;
    background: #d5d5d5;
    font-size: 14px;
}

.add {
    width: 39px;
    padding-right: 5px;
}

.doc-tab {
    justify-content: flex-start;
    width: 200px;
    height: 27px;
    gap: 4px;
    margin-right: 2px;
    padding-left: 11px;
    border-radius: 0 0 4px 4px;
    background: #e9e9e9;
    color: #777;
}

.doc-tab-active {
    height: 28px;
    border-bottom: 2px solid #1651b0;
    background: #fff;
    color: #333;
}
```
